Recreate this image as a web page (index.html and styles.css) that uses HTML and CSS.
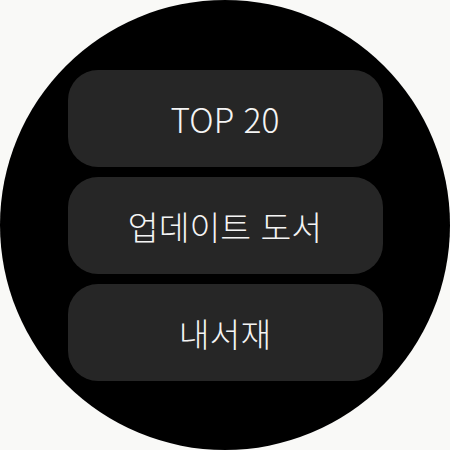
FILE: index.html
```html
<!DOCTYPE html>
<html lang="ko">
<head>
<meta charset="utf-8">
<link rel="stylesheet" href="styles.css">
</head>
<body>
<div class="screen">
  <div class="watch">
    <div class="menu">
      <div class="item">TOP 20</div>
      <div class="item">업데이트 도서</div>
      <div class="item">내서재</div>
    </div>
  </div>
</div>
</body>
</html>
```
FILE: styles.css
```css
html, body {
  margin: 0;
  padding: 0;
  background: #f9f9f7;
}
.screen {
  width: 450px;
  height: 450px;
  background: #f9f9f7;
}
.watch {
  width: 450px;
  height: 450px;
  border-radius: 50%;
  background: #000;
  display: flex;
  align-items: center;
  justify-content: center;
}
.menu {
  display: flex;
  flex-direction: column;
  gap: 10px;
}
.item {
  width: 315px;
  height: 97px;
  border-radius: 30px;
  background: #262626;
  color: #f4f4f4;
  display: flex;
  align-items: center;
  justify-content: center;
  font-family: "Noto Sans CJK KR", "Noto Sans", sans-serif;
  font-size: 33.5px;
  font-weight: 300;
}
```
